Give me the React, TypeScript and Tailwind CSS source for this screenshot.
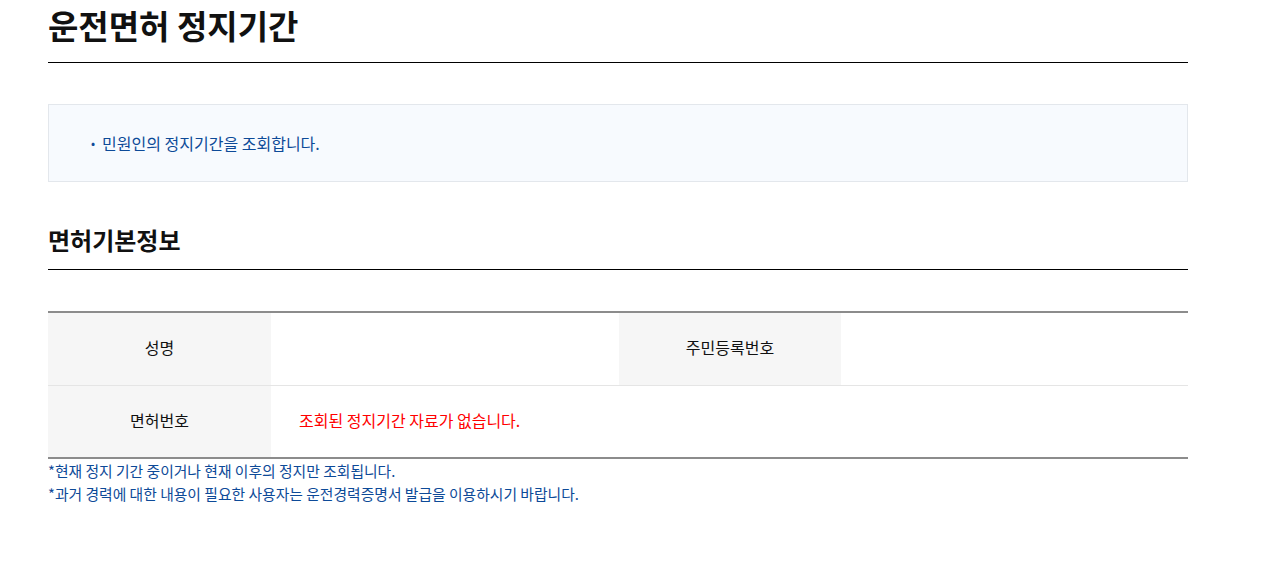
const font = {
  fontFamily: '"Noto Sans CJK KR", "Noto Sans", sans-serif',
};

function InfoRow({
  label,
  value,
  label2,
  value2,
  last,
}: {
  label: string;
  value?: React.ReactNode;
  label2?: string;
  value2?: React.ReactNode;
  last?: boolean;
}) {
  return (
    <tr className={last ? "" : "border-b border-[#e5e5e5]"}>
      <th className="h-[73px] w-[223px] bg-[#f6f6f6] pb-[3px] text-center text-[16px] font-normal text-[#111]">
        {label}
      </th>
      <td className="w-[348px] px-7 pb-[3px] text-[16px]">{value}</td>
      {label2 !== undefined ? (
        <>
          <th className="w-[222px] bg-[#f6f6f6] pb-[3px] text-center text-[16px] font-normal text-[#111]">
            {label2}
          </th>
          <td className="px-7 text-[16px]">{value2}</td>
        </>
      ) : (
        <td colSpan={2} />
      )}
    </tr>
  );
}

export default function App() {
  return (
    <div className="min-h-screen bg-white" style={font}>
      <div className="ml-12 w-[1140px]">
        <h1 className="border-b border-black pt-[2px] pb-[13px] text-[33px] leading-[47px] font-bold text-[#111]">
          운전면허 정지기간
        </h1>

        <div className="mt-[41px] border border-[#e3e7ec] bg-[#f7fafe] py-[26px] pl-[42px]">
          <ul className="text-[16px] leading-[24px] text-[#0d4a98]">
            <li className="flex items-center gap-[7px]">
              <span className="text-[12px]">•</span>
              민원인의 정지기간을 조회합니다.
            </li>
          </ul>
        </div>

        <h2 className="mt-[41px] border-b border-black pb-[12px] text-[24px] leading-[34px] font-bold text-[#111]">
          면허기본정보
        </h2>

        <table className="mt-[41px] w-full border-collapse border-y-2 border-[#8c8c8c]">
          <tbody>
            <InfoRow label="성명" label2="주민등록번호" />
            <InfoRow
              label="면허번호"
              value={<span className="text-[#ff0000]">조회된 정지기간 자료가 없습니다.</span>}
              last
            />
          </tbody>
        </table>

        <div className="text-[14.8px] leading-[23px] text-[#0d4a98]">
          <p>*현재 정지 기간 중이거나 현재 이후의 정지만 조회됩니다.</p>
          <p>*과거 경력에 대한 내용이 필요한 사용자는 운전경력증명서 발급을 이용하시기 바랍니다.</p>
        </div>
      </div>
    </div>
  );
}
